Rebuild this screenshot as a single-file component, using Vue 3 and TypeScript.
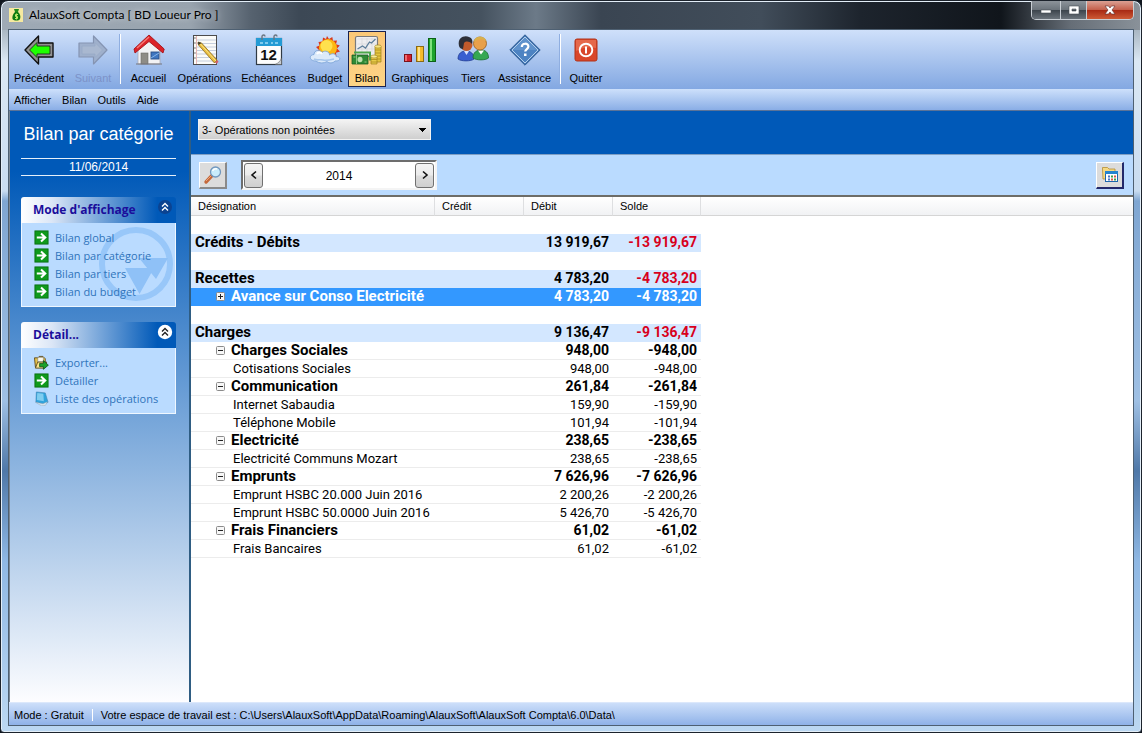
<script setup lang="ts">
import { ref } from 'vue'

interface Tool {
  id: string
  label: string
  disabled?: boolean
}
interface Row {
  kind: 'blank' | 'total' | 'group' | 'item'
  label?: string
  debit?: string
  solde?: string
  closed?: boolean
}

const navTools: Tool[] = [
  { id: 'back', label: 'Précédent' },
  { id: 'next', label: 'Suivant', disabled: true },
]
const mainTools: Tool[] = [
  { id: 'home', label: 'Accueil' },
  { id: 'ops', label: 'Opérations' },
  { id: 'due', label: 'Echéances' },
  { id: 'budget', label: 'Budget' },
  { id: 'bilan', label: 'Bilan' },
  { id: 'charts', label: 'Graphiques' },
  { id: 'people', label: 'Tiers' },
  { id: 'help', label: 'Assistance' },
]
const quitTools: Tool[] = [{ id: 'quit', label: 'Quitter' }]
const toolGroups = [navTools, mainTools, quitTools]
const activeTool = ref('bilan')

const menus = ['Afficher', 'Bilan', 'Outils', 'Aide']
const viewLinks = ['Bilan global', 'Bilan par catégorie', 'Bilan par tiers', 'Bilan du budget']
const detailLinks = [
  { icon: 'export', label: 'Exporter...' },
  { icon: 'arrow', label: 'Détailler' },
  { icon: 'list', label: 'Liste des opérations' },
]

const filter = ref('3- Opérations non pointées')
const year = ref(2014)
const selected = ref('Avance sur Conso Electricité')

const rows: Row[] = [
  { kind: 'blank' },
  { kind: 'total', label: 'Crédits - Débits', debit: '13 919,67', solde: '-13 919,67' },
  { kind: 'blank' },
  { kind: 'total', label: 'Recettes', debit: '4 783,20', solde: '-4 783,20' },
  { kind: 'group', label: 'Avance sur Conso Electricité', debit: '4 783,20', solde: '-4 783,20', closed: true },
  { kind: 'blank' },
  { kind: 'total', label: 'Charges', debit: '9 136,47', solde: '-9 136,47' },
  { kind: 'group', label: 'Charges Sociales', debit: '948,00', solde: '-948,00' },
  { kind: 'item', label: 'Cotisations Sociales', debit: '948,00', solde: '-948,00' },
  { kind: 'group', label: 'Communication', debit: '261,84', solde: '-261,84' },
  { kind: 'item', label: 'Internet Sabaudia', debit: '159,90', solde: '-159,90' },
  { kind: 'item', label: 'Téléphone Mobile', debit: '101,94', solde: '-101,94' },
  { kind: 'group', label: 'Electricité', debit: '238,65', solde: '-238,65' },
  { kind: 'item', label: 'Electricité Communs Mozart', debit: '238,65', solde: '-238,65' },
  { kind: 'group', label: 'Emprunts', debit: '7 626,96', solde: '-7 626,96' },
  { kind: 'item', label: 'Emprunt HSBC 20.000 Juin 2016', debit: '2 200,26', solde: '-2 200,26' },
  { kind: 'item', label: 'Emprunt HSBC 50.0000 Juin 2016', debit: '5 426,70', solde: '-5 426,70' },
  { kind: 'group', label: 'Frais Financiers', debit: '61,02', solde: '-61,02' },
  { kind: 'item', label: 'Frais Bancaires', debit: '61,02', solde: '-61,02' },
]
</script>

<template>
  <div class="window">
    <header class="titlebar">
      <svg class="app-icon" viewBox="0 0 14 14" aria-hidden="true">
        <rect width="14" height="14" fill="#f6e9a0" />
        <path d="M5 1h5l-1 3H6z" fill="#1f8a1c" />
        <path d="M6 4h3c2 2 3 4 2 7-1 2-6 2-7.500 0C3 8 4 6 6 4z" fill="#0c7a12" />
        <path d="M9 6.500H6.500v2h2v2H6M7.500 5.500v6" fill="none" stroke="#b9e86a" stroke-width="1" />
      </svg>
      <h1 class="app-title">AlauxSoft Compta [ BD Loueur Pro ]</h1>
      <div class="win-buttons">
        <button type="button" class="win-btn min" aria-label="Réduire">
          <svg viewBox="0 0 12 10"><rect x="1" y="5" width="10" height="3" fill="#fff" stroke="#474d55" stroke-width="0.600" /></svg>
        </button>
        <button type="button" class="win-btn max" aria-label="Agrandir">
          <svg viewBox="0 0 12 10"><path d="M1 1h10v8H1zM4 4v2h4V4z" fill="#fff" fill-rule="evenodd" stroke="#474d55" stroke-width="0.600" /></svg>
        </button>
        <button type="button" class="win-btn close" aria-label="Fermer">
          <svg viewBox="0 0 12 10"><path d="M1 1H4.500L6 3 7.500 1H11L8 5l3 4H7.500L6 7 4.500 9H1L4 5z" fill="#fff" stroke="#5b2a2a" stroke-width="0.600" /></svg>
        </button>
      </div>
    </header>

    <div class="client">
      <nav class="toolbar">
        <template v-for="(group, g) in toolGroups" :key="g">
          <span v-if="g > 0" class="tool-sep"></span>
          <button
            v-for="t in group"
            :key="t.id"
            type="button"
            class="tool"
            :class="{ active: t.id === activeTool }"
            :disabled="t.disabled"
            @click="activeTool = t.id"
          >
            <svg class="tool-icon" viewBox="0 0 32 32" aria-hidden="true">
              <template v-if="t.id === 'back'">
                <path d="M2 16 15.500 2v7H30v14H15.500v7z" fill="#929292" stroke="#111" stroke-width="1.400" stroke-linejoin="round" />
                <path d="M6.500 16 14 8.500V12H27v8H14v3.500z" fill="#1fff00" stroke="#222" stroke-width="0.900" />
              </template>
              <template v-else-if="t.id === 'next'">
                <path d="M30 16 16.500 2v7H2v14h14.500v7z" fill="#9fb0cc" stroke="#8594b2" stroke-width="1.200" stroke-linejoin="round" />
                <path d="M25.500 16 18 8.500V12H5v8h13v3.500z" fill="#a9b8d0" stroke="#98a9c6" stroke-width="0.800" />
              </template>
              <template v-else-if="t.id === 'home'">
                <path d="M5 14 16 5l11 10v15H5z" fill="#f2f2f4" stroke="#a9a9b4" stroke-width="0.800" />
                <rect x="8" y="19" width="7" height="11" fill="#8e8c86" stroke="#6d6b66" stroke-width="0.600" />
                <rect x="18" y="18" width="8" height="7" fill="#3f76c0" stroke="#2a4f86" stroke-width="0.900" />
                <path d="M18 24l8-5" stroke="#86b3e6" stroke-width="1" />
                <path d="M16 1 1 15l1 4L16 7.500 30 19l1.200-4z" fill="#dc2228" stroke="#a51318" stroke-width="0.900" stroke-linejoin="round" />
                <path d="M16 3 4 14" stroke="#f77a74" stroke-width="1.400" />
                <path d="M3 30h26" stroke="#77777f" stroke-width="1" />
              </template>
              <template v-else-if="t.id === 'ops'">
                <rect x="4.500" y="1.500" width="23" height="29" fill="#fbfbf8" stroke="#4c4c4c" stroke-width="1" />
                <path d="M8 6h19M8 9.500h19M8 13h19M8 16.500h19M8 20h19M8 23.500h19M8 27h19" stroke="#b9c4d6" stroke-width="0.800" />
                <path d="M7.500 2v28" stroke="#d99" stroke-width="0.700" />
                <path d="M5.200 4h1.500M5.200 9h1.500M5.200 14h1.500M5.200 19h1.500M5.200 24h1.500" stroke="#555" stroke-width="1.200" />
                <path d="M9 8l3.500 1L28 26l-2.500 3L9.500 11z" fill="#e9bd3c" stroke="#8a6a1c" stroke-width="0.800" />
                <path d="M11 9.500 27 27" stroke="#fae48b" stroke-width="1" />
                <path d="M9 8l.5 3 3-2z" fill="#333" />
                <path d="M26 28.500l2.300-2.500 1.200 1.800-1.800 1.900z" fill="#d4606a" />
              </template>
              <template v-else-if="t.id === 'due'">
                <rect x="3.500" y="4.500" width="25" height="26" fill="#fdfdfd" stroke="#303a44" stroke-width="1.200" />
                <rect x="3" y="4" width="26" height="8" fill="#249bd4" />
                <path d="M7 9h3M12 9h3M18 9h2M22 9h3" stroke="#7fcbee" stroke-width="2" />
                <path d="M9 6V2.500a1.500 1.500 0 0 1 3 0M21 6V2.500a1.500 1.500 0 0 1 3 0" fill="none" stroke="#6a7580" stroke-width="1.400" />
                <path d="M22 30.500h6.500V24c-1 3-3 5-6.500 6.500z" fill="#c9cdd2" stroke="#555" stroke-width="0.500" />
                <text x="15.500" y="26" text-anchor="middle" class="cal-num">12</text>
              </template>
              <template v-else-if="t.id === 'budget'">
                <path d="M18 2l2 3 3.300-2 .7 3.800 4-.3-1 3.800 3.800 1.200L28 14.500l3 3-4 1.300.5 4-4-.8H12L8 17l2-1-3-3 3.500-1.500L9.500 8l4-.5L14 3.500 17 5z" fill="#d9391c" />
                <circle cx="19" cy="14" r="9" fill="#fdb813" />
                <circle cx="17.500" cy="12" r="6" fill="#ffe14e" />
                <path d="M7 27c-7 0-7.500-6-2-6.500C5 16 11 15 13 18.500c3-3 8-.5 7.500 2.500 3-2.500 7-1 6.500 1.500 5.500 0 5 5-1 4.500-2 2.500-6 2.500-8 .500-3 2-8 2-11-.5z" fill="#dceafa" stroke="#7ea6d8" stroke-width="0.900" />
                <path d="M5 25c3 2 6 0 9 1s7 0 11-1" fill="none" stroke="#a6c6ec" stroke-width="1.600" />
                <path d="M8 20c1-2 4-2 5 0" fill="none" stroke="#fff" stroke-width="2" />
              </template>
              <template v-else-if="t.id === 'bilan'">
                <rect x="4.500" y="2.500" width="22" height="20" rx="1.500" fill="#eeeef0" stroke="#7b7b7b" stroke-width="1.200" />
                <path d="M6.500 5h18M6.500 10h18M6.500 15h18M11 4v14M16 4v14M21 4v14" stroke="#d6d6da" stroke-width="0.700" />
                <path d="M6.500 15l5-3 3 2 4-6 2 1 4-4" fill="none" stroke="#5f7f9b" stroke-width="1.300" />
                <path d="M1 21h16v9H1z" fill="#2f8a35" stroke="#1b5f22" stroke-width="0.800" />
                <path d="M3 18.500h16v8" fill="none" stroke="#4ca84c" stroke-width="2" />
                <ellipse cx="9" cy="25.500" rx="2.500" ry="2.800" fill="#bfe2b0" />
                <path d="M2.500 23h2M13.500 28h2M5.500 21v9" stroke="#8cc684" stroke-width="1" />
                <path d="M24 13h6v15h-6z" fill="#e5c63f" stroke="#9b7d1a" stroke-width="0.700" />
                <ellipse cx="27" cy="12.500" rx="3.300" ry="1.600" fill="#f7e584" stroke="#9b7d1a" stroke-width="0.600" />
                <path d="M24 16h6M24 19h6M24 22h6M24 25h6" stroke="#a98a20" stroke-width="0.800" />
                <path d="M20 23h6v7h-6z" fill="#e8cc4b" stroke="#9b7d1a" stroke-width="0.700" />
                <ellipse cx="23" cy="22.500" rx="3.200" ry="1.500" fill="#f9eb96" stroke="#9b7d1a" stroke-width="0.600" />
                <path d="M20 25.500h6M20 28h6" stroke="#a98a20" stroke-width="0.800" />
              </template>
              <template v-else-if="t.id === 'charts'">
                <rect x="0.500" y="20.500" width="7" height="7" fill="#d3202c" stroke="#7c1118" />
                <rect x="1" y="21" width="2" height="6" fill="#ef6a70" />
                <rect x="12.500" y="12.500" width="7" height="15" fill="#f4bb2c" stroke="#8a6b16" />
                <rect x="14" y="13" width="2" height="14" fill="#fde28a" />
                <rect x="24.500" y="4.500" width="7" height="23" fill="#1da32c" stroke="#0b6216" />
                <rect x="26" y="5" width="2" height="22" fill="#7fe27c" />
              </template>
              <template v-else-if="t.id === 'people'">
                <path d="M1 25c0-6 4-8 8-8s8 2 8 8c-3 2.500-13 2.500-16 0z" fill="#3a5fd0" stroke="#223c92" stroke-width="0.800" />
                <path d="M16 24c0-6 4-8 8-8s7.500 2 7.500 8c-3 2.500-12 2.500-15.500 0z" fill="#35a853" stroke="#1c6e33" stroke-width="0.800" />
                <path d="M21 16.500l3 4 3-4z" fill="#fff" />
                <circle cx="23" cy="9.500" r="6.500" fill="#e9a04a" stroke="#9a5b17" stroke-width="0.800" />
                <path d="M17 8c0-7 12-7 12.500 0-2-3-7-4-12.500 0z" fill="#d8b04c" />
                <circle cx="9.500" cy="11" r="6" fill="#c05a2c" />
                <path d="M2 12C0 3 8 1 12 3c3 1 4 4 3 7-3-3-6-3-8-1l-1 6c-2 0-3.500-1-4-3z" fill="#2d2f38" />
                <path d="M7 17l2.500 4 2.500-4z" fill="#d8e2ff" />
              </template>
              <template v-else-if="t.id === 'help'">
                <path d="M16 .8 31.200 16 16 31.200.8 16z" fill="#4176b5" stroke="#345f94" stroke-width="1" />
                <path d="M16 3 29 16 16 29 3 16z" fill="#4d83c2" stroke="#c4daf2" stroke-width="0.900" />
                <path d="M16 3.500 28.500 16h-25z" fill="#6d9dd2" opacity="0.600" />
                <path d="M12.800 13c0-4.300 6.600-4.300 6.600-.4 0 2.400-3.200 2.500-3.200 5" fill="none" stroke="#fff" stroke-width="2.200" />
                <rect x="15" y="19.500" width="2.500" height="2.500" fill="#fff" />
              </template>
              <template v-else>
                <rect x="5" y="5" width="22" height="22" rx="2" fill="#d9462a" stroke="#b23319" />
                <path d="M6 6h20v8C19 12 12 14 6 17z" fill="#ea7658" opacity="0.700" />
                <circle cx="16" cy="16" r="6.300" fill="none" stroke="#fff" stroke-width="1.900" />
                <path d="M16 12.500v7" stroke="#fff" stroke-width="2" />
              </template>
            </svg>
            <span>{{ t.label }}</span>
          </button>
        </template>
      </nav>

      <nav class="menubar">
        <button v-for="m in menus" :key="m" type="button" class="menu">{{ m }}</button>
      </nav>

      <div class="body">
        <aside class="sidebar">
          <h2 class="side-title">Bilan par catégorie</h2>
          <p class="side-date">11/06/2014</p>

          <section class="panel">
            <div class="panel-head">
              <h3>Mode d'affichage</h3>
              <button type="button" class="fold" aria-label="Replier Mode d'affichage">
                <svg viewBox="0 0 16 16">
                  <circle cx="8" cy="8" r="7" fill="#0b4391" />
                  <path d="M5 7.500l3-3 3 3M5 11.500l3-3 3 3" fill="none" stroke="#fff" stroke-width="1.400" />
                </svg>
              </button>
            </div>
            <div class="panel-body">
              <svg class="watermark" viewBox="0 0 78 78" aria-hidden="true">
                <circle cx="39" cy="39" r="34" fill="none" stroke="#98c7f9" stroke-width="6" />
                <path d="M28 43h29L42.500 69zM42 33h29L59 54z" fill="#8fc1f7" />
              </svg>
              <a v-for="l in viewLinks" :key="l" href="#" class="side-link">
                <svg viewBox="0 0 16 16" aria-hidden="true">
                  <rect x="1" y="1" width="14" height="14" fill="#0f9a1c" stroke="#0a6f12" />
                  <path d="M3 8h8M7.500 3.800 12 8l-4.500 4.200" fill="none" stroke="#fff" stroke-width="2.200" />
                </svg>
                <span>{{ l }}</span>
              </a>
            </div>
          </section>

          <section class="panel">
            <div class="panel-head">
              <h3>Détail...</h3>
              <button type="button" class="fold" aria-label="Replier Détail">
                <svg viewBox="0 0 16 16">
                  <circle cx="8" cy="8" r="7.200" fill="#fff" />
                  <path d="M5 7.500l3-3 3 3M5 11.500l3-3 3 3" fill="none" stroke="#222" stroke-width="1.400" />
                </svg>
              </button>
            </div>
            <div class="panel-body">
              <a v-for="l in detailLinks" :key="l.label" href="#" class="side-link">
                <svg viewBox="0 0 16 16" aria-hidden="true">
                  <template v-if="l.icon === 'arrow'">
                    <rect x="1" y="1" width="14" height="14" fill="#0f9a1c" stroke="#0a6f12" />
                    <path d="M3 8h8M7.500 3.800 12 8l-4.500 4.200" fill="none" stroke="#fff" stroke-width="2.200" />
                  </template>
                  <template v-else-if="l.icon === 'export'">
                    <path d="M.5 3h4l1-1.500h4L12 4v9H1.500z" fill="#e8c34a" stroke="#54431a" stroke-width="0.900" />
                    <path d="M4 2.500h6v5H4z" fill="#f8f8ee" stroke="#777" stroke-width="0.600" />
                    <path d="M1.500 14 4 7.500h9.500L11 14z" fill="#f9e38c" stroke="#54431a" stroke-width="0.900" />
                    <path d="M6 9h4V6l5.300 4.800L10 15.300V12.500H6z" fill="#1ba12b" stroke="#0a4d12" stroke-width="0.800" />
                  </template>
                  <template v-else>
                    <path d="M2.500 1 12 2l3 10-4 2-9-2z" fill="#2fa3dc" stroke="#3a7fae" stroke-width="0.600" />
                    <path d="M3.500 2 10 2.800l.5 8L3 9.500z" fill="#7fcdf0" />
                    <path d="M1.500 12l8 1.500 5-2-2.500 4-4 .3z" fill="#d6e4ec" stroke="#8fa8b8" stroke-width="0.500" />
                  </template>
                </svg>
                <span>{{ l.label }}</span>
              </a>
            </div>
          </section>
        </aside>

        <main class="main">
          <div class="filter-bar">
            <select v-model="filter" class="filter" aria-label="Filtre des opérations">
              <option>3- Opérations non pointées</option>
            </select>
          </div>
          <div class="period-bar">
            <button type="button" class="square-btn" aria-label="Rechercher">
              <svg viewBox="0 0 20 20">
                <path d="M9 10.500 3 17" stroke="#c4683a" stroke-width="3.400" stroke-linecap="round" />
                <path d="M8.500 10.500 3 16" stroke="#eda37a" stroke-width="1" />
                <circle cx="12.500" cy="7" r="5" fill="#c9ecfb" stroke="#7297bd" stroke-width="1.300" />
                <path d="M9.500 6c1-2 3-2.500 4.500-2" fill="none" stroke="#fff" stroke-width="1.500" />
              </svg>
            </button>
            <div class="year-box">
              <button type="button" class="step" aria-label="Année précédente" @click="year--">
                <svg viewBox="0 0 10 10"><path d="M7 1.500 3 5l4 3.500" fill="none" stroke="#111" stroke-width="1.600" /></svg>
              </button>
              <output class="year">{{ year }}</output>
              <button type="button" class="step" aria-label="Année suivante" @click="year++">
                <svg viewBox="0 0 10 10"><path d="M3 1.500 7 5 3 8.500" fill="none" stroke="#111" stroke-width="1.600" /></svg>
              </button>
            </div>
            <button type="button" class="square-btn dark" aria-label="Calendrier">
              <svg viewBox="0 0 20 20">
                <path d="M2.500 4V2.500h5L9 4h6v10H3z" fill="#f6d983" stroke="#b58e34" stroke-width="0.800" />
                <rect x="5.500" y="6.500" width="12" height="10" fill="#fff" stroke="#1c66ad" />
                <rect x="5" y="6" width="13" height="3" fill="#2483cf" />
                <path d="M8 11.500h2M8 14.500h2" stroke="#4a78c4" stroke-width="2" />
                <path d="M11 11.500h2M14 14.500h2" stroke="#3aa24a" stroke-width="2" />
                <path d="M14 11.500h2M11 14.500h2" stroke="#d8574a" stroke-width="2" />
              </svg>
            </button>
          </div>

          <div class="grid-wrap">
            <table class="grid">
              <colgroup>
                <col class="c-name" />
                <col class="c-num" />
                <col class="c-num" />
                <col class="c-last" />
                <col />
              </colgroup>
              <thead>
                <tr>
                  <th>Désignation</th>
                  <th>Crédit</th>
                  <th>Débit</th>
                  <th>Solde</th>
                  <td></td>
                </tr>
              </thead>
              <tbody>
                <tr
                  v-for="(r, i) in rows"
                  :key="i"
                  :class="[r.kind, { selected: r.kind === 'group' && r.label === selected }]"
                >
                  <td class="name">
                    <div class="name-in">
                      <svg v-if="r.kind === 'group'" class="knob" viewBox="0 0 9 9" aria-hidden="true">
                        <rect x="0.500" y="0.500" width="8" height="8" rx="1" fill="#f7f7f7" stroke="#8b8b8b" />
                        <path :d="r.closed ? 'M2 4.500h5M4.500 2v5' : 'M2 4.500h5'" stroke="#222" stroke-width="1" />
                      </svg>
                      <span>{{ r.label }}</span>
                    </div>
                  </td>
                  <td></td>
                  <td class="num">{{ r.debit }}</td>
                  <td class="num solde">{{ r.solde }}</td>
                  <td class="rest"></td>
                </tr>
              </tbody>
            </table>
          </div>
        </main>
      </div>

      <footer class="status">
        <span class="status-mode">Mode : Gratuit</span>
        <span>Votre espace de travail est : C:\Users\AlauxSoft\AppData\Roaming\AlauxSoft\AlauxSoft Compta\6.0\Data\</span>
      </footer>
    </div>
  </div>
</template>

<style>
html,
body {
  background: #10161e;
}
</style>

<style scoped>
* {
  box-sizing: border-box;
}
button,
select {
  font: inherit;
  color: inherit;
  margin: 0;
}
h1,
h2,
h3,
p {
  margin: 0;
  font-weight: normal;
}
.window {
  display: flex;
  flex-direction: column;
  min-height: 100vh;
  padding: 0 7px 6px;
  border: 1px solid #1c232c;
  border-radius: 8px 8px 4px 4px;
  box-shadow: inset 0 0 0 1px #e3eef8;
  background:
    linear-gradient(90deg, #9faab5 0, #98a3ae 190px, #56626f 250px, #3c4855 300px, #45525f 480px, #6c7a88 535px, #3a4552 600px, #414d5a 760px, #1d242d 860px, #10151b 1000px, #666e77 1070px, #8a929a 100%) 0 0 / 100% 29px no-repeat,
    linear-gradient(180deg, #7b8894 0, #dbe8f4 60px, #c9dcf0 190px, #7fa6d2 200px, #9fc0e4 400px, #4f78a8 470px, #8fb8e4 560px, #bcd8f2 100%);
  font-family: "Liberation Sans", Arial, sans-serif;
  font-size: 11px;
  color: #000;
}
.titlebar {
  display: flex;
  align-items: flex-start;
  height: 28px;
}
.app-icon {
  width: 14px;
  height: 14px;
  margin: 7px 6px 0 1px;
}
.app-title {
  flex: 1;
  font-family: Lato, "Open Sans", sans-serif;
  font-size: 12px;
  line-height: 28px;
  white-space: nowrap;
  text-shadow: 0 0 6px rgba(255, 255, 255, 0.7);
}
.win-buttons {
  display: flex;
  border: 1px solid #c8ced4;
  border-top: 0;
  border-radius: 0 0 5px 5px;
  overflow: hidden;
}
.win-btn {
  display: flex;
  align-items: center;
  justify-content: center;
  height: 18px;
  padding: 0;
  border: 0;
  border-right: 1px solid #c8ced4;
  background: linear-gradient(#8c939a 0, #6c747c 48%, #3d454d 52%, #6b737b 100%);
}
.win-btn svg {
  width: 12px;
  height: 10px;
}
.win-btn.min {
  width: 29px;
}
.win-btn.max {
  width: 26px;
}
.win-btn.close {
  width: 46px;
  border-right: 0;
  background: linear-gradient(#dba093 0, #c4604c 48%, #a82a14 52%, #cd5a36 100%);
}
.client {
  flex: 1;
  display: flex;
  flex-direction: column;
  border: 1px solid #4e6072;
  background: #fff;
}
.toolbar {
  display: grid;
  grid-template-columns: 60px 48px 6px 51px 61px 67px 46px 38px 68px 38px 65px 6px 46px;
  height: 59px;
  background: linear-gradient(#cfe0fa, #83a8e2);
}
.tool {
  display: flex;
  flex-direction: column;
  align-items: center;
  gap: 5px;
  height: 56px;
  margin-top: 1px;
  padding: 2px 0 0;
  border: 1px solid transparent;
  background: none;
  line-height: 14px;
  white-space: nowrap;
}
.tool:disabled {
  color: #7c92c8;
}
.tool.active {
  border-color: #1a2350;
  background: linear-gradient(#fbc877, #fdd486);
}
.tool-icon {
  flex: none;
  width: 32px;
  height: 32px;
}
.cal-num {
  font-family: "Liberation Sans", Arial, sans-serif;
  font-size: 15px;
  font-weight: bold;
  fill: #111;
}
.tool-sep {
  width: 2px;
  height: 50px;
  margin: 4px 2px 0;
  border-left: 1px solid #8faee0;
  background: #fff;
}
.menubar {
  display: flex;
  gap: 11px;
  height: 22px;
  padding-left: 5px;
  border-bottom: 1px solid #5a7398;
  background: linear-gradient(#cde0fb, #8aaee6);
}
.menu {
  padding: 0;
  border: 0;
  background: none;
}
.body {
  flex: 1;
  display: flex;
  background: #0059b8;
}
.sidebar {
  width: 182px;
  flex: none;
  padding: 12px 13px 0 11px;
  border-left: 1px solid #7a8794;
  border-right: 2px solid #2f5d83;
  background: linear-gradient(#0059b8 0, #0059b8 60px, #fdfdff 100%);
}
.side-title {
  font-size: 18px;
  line-height: 22px;
  color: #fff;
  text-align: center;
  white-space: nowrap;
}
.side-date {
  margin: 13px 0 21px;
  border: solid #e6f0fa;
  border-width: 1px 0;
  font-size: 12px;
  line-height: 16px;
  color: #fff;
  text-align: center;
}
.panel {
  margin-bottom: 15px;
}
.panel-head {
  display: flex;
  justify-content: space-between;
  height: 26px;
  padding: 0 3px 0 12px;
  border-radius: 3px 3px 0 0;
  background: linear-gradient(90deg, #fff 0, #dbe6f6 20%, #0059b8 88%);
}
.panel-head h3 {
  font-family: "Open Sans", "Noto Sans", sans-serif;
  font-size: 12px;
  font-weight: bold;
  line-height: 26px;
  color: #1b0d9b;
}
.fold {
  width: 16px;
  height: 16px;
  margin-top: 2px;
  padding: 0;
  border: 0;
  background: none;
}
.fold svg {
  display: block;
}
.panel-body {
  position: relative;
  padding: 5px 0 6px 12px;
  border: solid #eff7ff;
  border-width: 0 1px 1px;
  background: #badbff;
  overflow: hidden;
}
.watermark {
  position: absolute;
  right: 0;
  top: 2px;
  width: 78px;
  height: 78px;
}
.side-link {
  position: relative;
  display: flex;
  align-items: center;
  gap: 6px;
  height: 18px;
  font-family: "Open Sans", "Noto Sans", sans-serif;
  font-size: 11px;
  color: #2f74bb;
  text-decoration: none;
  white-space: nowrap;
}
.side-link svg {
  width: 15px;
  height: 15px;
}
.main {
  flex: 1;
  min-width: 0;
  display: flex;
  flex-direction: column;
}
.filter-bar {
  height: 43px;
  padding: 8px 7px;
}
.filter {
  appearance: none;
  display: block;
  width: 233px;
  height: 21px;
  padding: 0 20px 0 3px;
  border: 1px solid #f2f2f2;
  border-radius: 0;
  background:
    linear-gradient(135deg, #000 50%, transparent 50%) right 3px top 8px / 4px 4px no-repeat,
    linear-gradient(225deg, #000 50%, transparent 50%) right 7px top 8px / 4px 4px no-repeat,
    linear-gradient(#f3f3f3, #cfcfcf);
}
.period-bar {
  display: flex;
  align-items: center;
  height: 43px;
  padding: 0 9px 0 8px;
  border-top: 1px solid #7f9fc4;
  border-bottom: 2px solid #6d6d68;
  background: #badbff;
}
.square-btn {
  display: flex;
  align-items: center;
  justify-content: center;
  width: 28px;
  height: 27px;
  padding: 0;
  border: solid;
  border-width: 1px 2px 2px 1px;
  border-color: #fff #8a8a8a #8a8a8a #fff;
  background: #dcdcdc;
}
.square-btn svg {
  width: 20px;
  height: 20px;
}
.square-btn.dark {
  margin-left: auto;
  border-color: #fff #23296b #23296b #fff;
}
.year-box {
  display: flex;
  align-items: center;
  width: 196px;
  height: 30px;
  margin-left: 14px;
  padding: 1px;
  border: 2px solid;
  border-color: #6d6d6d #f4f4f4 #f4f4f4 #6d6d6d;
  background: #fff;
}
.step {
  display: flex;
  align-items: center;
  justify-content: center;
  width: 19px;
  height: 25px;
  padding: 0;
  border: 1px solid #707070;
  border-radius: 3px;
  background: linear-gradient(#f4f4f4 0, #ebebeb 48%, #dcdcdc 52%, #cfcfcf 100%);
}
.step svg {
  width: 10px;
  height: 10px;
}
.year {
  flex: 1;
  padding-top: 2px;
  font-size: 12px;
  text-align: center;
}
.grid-wrap {
  flex: 1;
  background: #fff;
}
.grid {
  width: 100%;
  table-layout: fixed;
  border-collapse: separate;
  border-spacing: 0;
  font-family: Roboto, "Liberation Sans", sans-serif;
  font-size: 13px;
  line-height: 17px;
}
.c-name {
  width: 244px;
}
.c-num {
  width: 89px;
}
.c-last {
  width: 88px;
}
.grid th,
.grid td {
  padding: 0;
}
.grid thead th,
.grid thead td {
  height: 19px;
  border-bottom: 1px solid #d5d5d5;
  background: linear-gradient(#fff, #f1f2f4);
}
.grid thead th {
  padding: 1px 0 0 7px;
  border-right: 1px solid #dedfe1;
  font-family: "Liberation Sans", Arial, sans-serif;
  font-size: 11px;
  font-weight: normal;
  text-align: left;
}
.grid tbody td {
  height: 18px;
  border-bottom: 1px solid transparent;
  white-space: nowrap;
}
.name-in {
  display: flex;
  align-items: center;
}
.num {
  text-align: right;
}
.grid tbody .num {
  padding-right: 4px;
}
.total,
.group {
  font-weight: bold;
}
.total .name-in,
.group .name-in {
  font-size: 15px;
}
.total .num,
.group .num {
  font-size: 14px;
}
.grid .total td:not(.rest) {
  border-color: #d3e7ff;
  background: #d3e7ff;
}
.total .name-in {
  padding-left: 4px;
}
.total .solde {
  color: #d8001c;
}
.group .name-in {
  gap: 6px;
  padding-left: 25px;
}
.knob {
  width: 9px;
  height: 9px;
}
.item .name-in {
  padding-left: 42px;
}
.grid .group td:not(.rest),
.grid .item td:not(.rest) {
  border-color: #ececec;
}
.grid .selected td:not(.rest) {
  border-color: #3398ff;
  background: #3398ff;
  color: #fff;
}
.status {
  display: flex;
  align-items: center;
  height: 23px;
  padding: 1px 0 0 5px;
  border-top: 1px solid #dce8fb;
  background: linear-gradient(#cddffa, #8fb2e8);
  white-space: nowrap;
}
.status-mode {
  margin-right: 8px;
  padding-right: 8px;
  border-right: 1px solid #fff;
}
</style>
